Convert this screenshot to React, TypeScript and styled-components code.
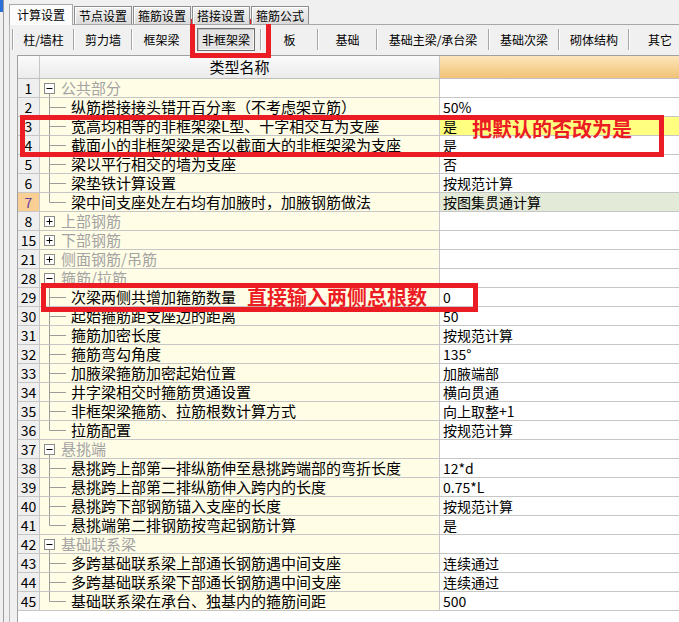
import React from "react";
import styled, { createGlobalStyle, css } from "styled-components";

const GlobalStyle = createGlobalStyle`
  html, body {
    margin: 0;
    padding: 0;
    background: #f0f0f0;
  }
  body {
    font-family: "Noto Sans CJK SC", "Noto Sans", sans-serif;
  }
`;

const RED = "#ec1c24";

const Page = styled.div`
  position: relative;
  width: 679px;
  height: 622px;
  overflow: hidden;
  display: flex;
  background: #f0f0f0;
`;

const LeftStrip = styled.div`
  width: 3px;
  flex: none;
  border-right: 1px solid #9c9c9c;
  background: linear-gradient(#2b6fd8 0 12px, #f0f0f0 12px);
`;

const TabControl = styled.div`
  flex: 1;
  min-width: 0;
  margin-left: 5px;
  display: flex;
  flex-direction: column;
`;

const TabStrip = styled.div`
  position: relative;
  z-index: 1;
  display: flex;
  align-items: flex-end;
  height: 20px;
  padding-top: 4px;
`;

const Tab = styled.div<{ $active?: boolean }>`
  box-sizing: border-box;
  height: 18px;
  margin-left: 1px;
  padding: 0 4px;
  border: 1px solid #8d8d8d;
  border-bottom: none;
  background: linear-gradient(#f3f3f3, #dadada);
  box-shadow: inset 1px 1px 0 #fff;
  font-size: 12px;
  line-height: 17px;
  color: #000;
  white-space: nowrap;
  ${({ $active }) =>
    $active &&
    css`
      height: 21px;
      margin-left: 0;
      margin-bottom: -1px;
      padding: 0 7px;
      border-color: #a8a8a8;
      background: #fcfcfc;
      box-shadow: none;
      line-height: 20px;
    `}
`;

const Panel = styled.div`
  flex: 1;
  min-height: 0;
  display: flex;
  flex-direction: column;
  border-top: 1px solid #a8a8a8;
  border-left: 1px solid #b8b8b8;
`;

const Toolbar = styled.div`
  height: 30px;
  box-sizing: border-box;
  padding-bottom: 2px;
  margin-left: 2px;
  display: flex;
  align-items: center;
  white-space: nowrap;
`;

const Separator = styled.div`
  flex: none;
  width: 1px;
  height: 21px;
  background: #a6a6a6;
  border-right: 1px solid #ffffff;
`;

const ToolItem = styled.div<{ $w: number }>`
  flex: none;
  width: ${({ $w }) => $w}px;
  display: flex;
  align-items: center;
  justify-content: center;
  font-size: 12px;
  color: #000;
`;

const ToolLabel = styled.span<{ $pressed?: boolean }>`
  display: flex;
  align-items: center;
  box-sizing: border-box;
  height: 23px;
  ${({ $pressed }) =>
    $pressed &&
    css`
      padding: 0 4px;
      border: 1px solid #6e6e6e;
      background: #e4e4e4;
      box-shadow: inset 1px 1px 0 #c4c4c4, inset -1px -1px 0 #f6f6f6;
    `}
`;

const Grid = styled.div`
  flex: 1;
  margin-left: 7px;
  border-left: 1px solid #a0a0a0;
  border-top: 1px solid #a0a0a0;
  background: #fff;
`;

const HeaderRow = styled.div`
  display: flex;
  height: 23px;
  box-sizing: border-box;
  border-bottom: 1px solid #c0c0c0;
`;

const HeadNum = styled.div`
  flex: none;
  width: 22px;
  box-sizing: border-box;
  border-right: 1px solid #c6c6c6;
  background: linear-gradient(#fbfbfb, #ececec);
`;

const HeadName = styled.div`
  flex: none;
  width: 400px;
  box-sizing: border-box;
  border-right: 1px solid #c6c6c6;
  background: linear-gradient(#fbfbfb, #ebebeb);
  font-size: 15px;
  line-height: 22px;
  text-align: center;
  color: #000;
`;

const HeadValue = styled.div`
  flex: 1;
  background: linear-gradient(#fde6bb, #f2c276);
`;

const Row = styled.div`
  display: flex;
  height: 19px;
  box-sizing: border-box;
  border-bottom: 1px solid #c6c6c6;
`;

const NumCell = styled.div<{ $current?: boolean }>`
  flex: none;
  width: 22px;
  box-sizing: border-box;
  border-right: 1px solid #c6c6c6;
  background: ${({ $current }) => ($current ? "#f9cf93" : "#efefef")};
  color: ${({ $current }) => ($current ? "#6a3ca2" : "#000")};
  font-size: 14px;
  line-height: 18px;
  text-align: center;
`;

const NameCell = styled.div`
  flex: none;
  width: 400px;
  box-sizing: border-box;
  border-right: 1px solid #c6c6c6;
  background: #fffde6;
  display: flex;
  align-items: center;
  white-space: nowrap;
`;

const NameText = styled.span<{ $group?: boolean }>`
  font-size: 15px;
  line-height: 18px;
  color: ${({ $group }) => ($group ? "#a3a3a3" : "#000")};
`;

const ValueCell = styled.div<{ $tone?: "yellow" | "current" }>`
  flex: 1;
  padding-left: 3px;
  font-size: 14px;
  line-height: 18px;
  color: #000;
  white-space: nowrap;
  background: ${({ $tone }) =>
    $tone === "yellow" ? "#ffff80" : $tone === "current" ? "#e3ebd8" : "#fff"};
`;

const Connector = styled.svg`
  flex: none;
  display: block;
`;

const RedBox = styled.div<{ $x: number; $y: number; $w: number; $h: number }>`
  position: absolute;
  left: ${({ $x }) => $x}px;
  top: ${({ $y }) => $y}px;
  width: ${({ $w }) => $w}px;
  height: ${({ $h }) => $h}px;
  box-sizing: border-box;
  border: 5px solid ${RED};
  pointer-events: none;
`;

const RedNote = styled.div<{ $x: number; $y: number }>`
  position: absolute;
  left: ${({ $x }) => $x}px;
  top: ${({ $y }) => $y}px;
  font-size: 20px;
  font-weight: 700;
  line-height: 22px;
  color: ${RED};
  white-space: nowrap;
`;

type Item =
  | { kind: "group"; no: number; name: string; open: boolean }
  | {
      kind: "child";
      no: number;
      name: string;
      value: string;
      last?: boolean;
      tone?: "yellow" | "current";
    };

const rows: Item[] = [
  { kind: "group", no: 1, name: "公共部分", open: true },
  { kind: "child", no: 2, name: "纵筋搭接接头错开百分率（不考虑架立筋）", value: "50%" },
  { kind: "child", no: 3, name: "宽高均相等的非框架梁L型、十字相交互为支座", value: "是", tone: "yellow" },
  { kind: "child", no: 4, name: "截面小的非框架梁是否以截面大的非框架梁为支座", value: "是" },
  { kind: "child", no: 5, name: "梁以平行相交的墙为支座", value: "否" },
  { kind: "child", no: 6, name: "梁垫铁计算设置", value: "按规范计算" },
  { kind: "child", no: 7, name: "梁中间支座处左右均有加腋时，加腋钢筋做法", value: "按图集贯通计算", last: true, tone: "current" },
  { kind: "group", no: 8, name: "上部钢筋", open: false },
  { kind: "group", no: 15, name: "下部钢筋", open: false },
  { kind: "group", no: 21, name: "侧面钢筋/吊筋", open: false },
  { kind: "group", no: 28, name: "箍筋/拉筋", open: true },
  { kind: "child", no: 29, name: "次梁两侧共增加箍筋数量", value: "0" },
  { kind: "child", no: 30, name: "起始箍筋距支座边的距离", value: "50" },
  { kind: "child", no: 31, name: "箍筋加密长度", value: "按规范计算" },
  { kind: "child", no: 32, name: "箍筋弯勾角度", value: "135°" },
  { kind: "child", no: 33, name: "加腋梁箍筋加密起始位置", value: "加腋端部" },
  { kind: "child", no: 34, name: "井字梁相交时箍筋贯通设置", value: "横向贯通" },
  { kind: "child", no: 35, name: "非框架梁箍筋、拉筋根数计算方式", value: "向上取整+1" },
  { kind: "child", no: 36, name: "拉筋配置", value: "按规范计算", last: true },
  { kind: "group", no: 37, name: "悬挑端", open: true },
  { kind: "child", no: 38, name: "悬挑跨上部第一排纵筋伸至悬挑跨端部的弯折长度", value: "12*d" },
  { kind: "child", no: 39, name: "悬挑跨上部第二排纵筋伸入跨内的长度", value: "0.75*L" },
  { kind: "child", no: 40, name: "悬挑跨下部钢筋锚入支座的长度", value: "按规范计算" },
  { kind: "child", no: 41, name: "悬挑端第二排钢筋按弯起钢筋计算", value: "是", last: true },
  { kind: "group", no: 42, name: "基础联系梁", open: true },
  { kind: "child", no: 43, name: "多跨基础联系梁上部通长钢筋遇中间支座", value: "连续通过" },
  { kind: "child", no: 44, name: "多跨基础联系梁下部通长钢筋遇中间支座", value: "连续通过" },
  { kind: "child", no: 45, name: "基础联系梁在承台、独基内的箍筋间距", value: "500", last: true },
];

const tabs = ["计算设置", "节点设置", "箍筋设置", "搭接设置", "箍筋公式"];

const tools = [
  { label: "柱/墙柱", w: 59 },
  { label: "剪力墙", w: 56 },
  { label: "框架梁", w: 57 },
  { label: "非框架梁", w: 68, pressed: true },
  { label: "板", w: 55 },
  { label: "基础", w: 57 },
  { label: "基础主梁/承台梁", w: 110 },
  { label: "基础次梁", w: 68 },
  { label: "砌体结构", w: 68 },
  { label: "其它", w: 60 },
];

const LINE = "#9c9c9c";

const Expander: React.FC<{ open: boolean }> = ({ open }) => (
  <Connector width="21" height="18" viewBox="0 0 21 18">
    <rect x="4.5" y="4.5" width="10" height="10" fill="#fff" stroke="#8c8c8c" />
    <line x1="6.5" y1="9.5" x2="12.5" y2="9.5" stroke="#000" />
    {!open && <line x1="9.5" y1="6.5" x2="9.5" y2="12.5" stroke="#000" />}
    {open && <line x1="9.5" y1="15" x2="9.5" y2="18" stroke={LINE} />}
  </Connector>
);

const Branch: React.FC<{ last?: boolean }> = ({ last }) => (
  <Connector width="31" height="18" viewBox="0 0 31 18">
    <line x1="9.5" y1="0" x2="9.5" y2={last ? 9.5 : 18} stroke={LINE} />
    <line x1="9.5" y1="9.5" x2="26" y2="9.5" stroke={LINE} />
  </Connector>
);

export default function App() {
  return (
    <>
      <GlobalStyle />
      <Page>
        <LeftStrip />
        <TabControl>
          <TabStrip>
            {tabs.map((t, i) => (
              <Tab key={t} $active={i === 0}>
                {t}
              </Tab>
            ))}
          </TabStrip>
          <Panel>
            <Toolbar>
              <Separator />
              {tools.map((tool, i) => (
                <React.Fragment key={tool.label}>
                  {i > 0 && <Separator />}
                  <ToolItem $w={tool.w}>
                    <ToolLabel $pressed={tool.pressed}>{tool.label}</ToolLabel>
                  </ToolItem>
                </React.Fragment>
              ))}
            </Toolbar>
            <Grid>
              <HeaderRow>
                <HeadNum />
                <HeadName>类型名称</HeadName>
                <HeadValue />
              </HeaderRow>
              {rows.map((r) => (
                <Row key={r.no}>
                  <NumCell $current={r.kind === "child" && r.tone === "current"}>
                    {r.no}
                  </NumCell>
                  <NameCell>
                    {r.kind === "group" ? (
                      <>
                        <Expander open={r.open} />
                        <NameText $group>{r.name}</NameText>
                      </>
                    ) : (
                      <>
                        <Branch last={r.last} />
                        <NameText>{r.name}</NameText>
                      </>
                    )}
                  </NameCell>
                  <ValueCell $tone={r.kind === "child" ? r.tone : undefined}>
                    {r.kind === "child" ? r.value : ""}
                  </ValueCell>
                </Row>
              ))}
            </Grid>
          </Panel>
        </TabControl>

        <RedBox $x={190} $y={19} $w={81} $h={39} />
        <RedBox $x={20} $y={115} $w={644} $h={42} />
        <RedNote $x={472} $y={118}>把默认的否改为是</RedNote>
        <RedBox $x={41} $y={283} $w={437} $h={29} />
        <RedNote $x={247} $y={286}>直接输入两侧总根数</RedNote>
      </Page>
    </>
  );
}
